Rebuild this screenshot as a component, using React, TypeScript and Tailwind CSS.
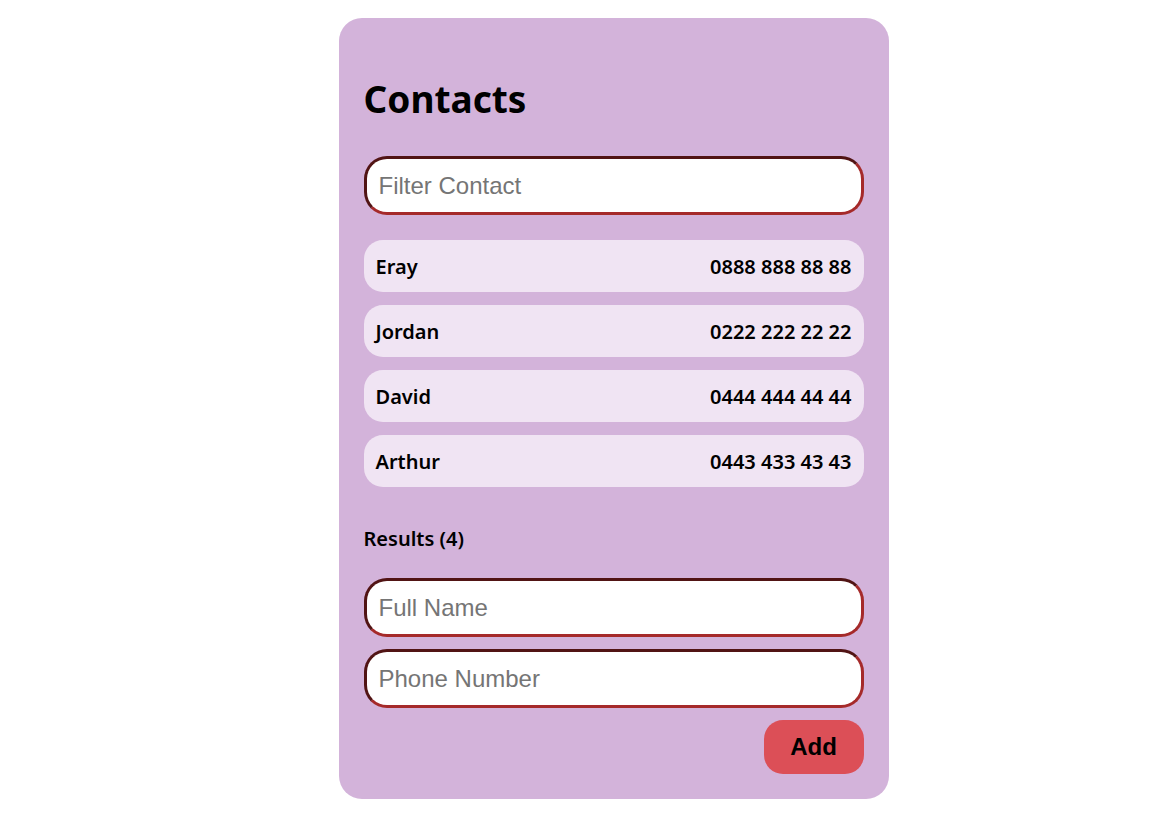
import { useState } from "react";
import type { FormEvent } from "react";

type Contact = { name: string; phone: string };

const initialContacts: Contact[] = [
  { name: "Eray", phone: "0888 888 88 88" },
  { name: "Jordan", phone: "0222 222 22 22" },
  { name: "David", phone: "0444 444 44 44" },
  { name: "Arthur", phone: "0443 433 43 43" },
];

type FieldProps = { label: string; value: string; onChange: (value: string) => void };

function Field({ label, value, onChange }: FieldProps) {
  return (
    <input
      type="text"
      aria-label={label}
      placeholder={label}
      value={value}
      onChange={(e) => onChange(e.target.value)}
      className="block h-[59px] w-full rounded-[23px] border-[3px] border-[brown] [border-style:inset] bg-white px-3 font-['Liberation_Sans',Arial,sans-serif] text-2xl text-black outline-none placeholder:text-[#757575]"
    />
  );
}

export default function App() {
  const [contacts, setContacts] = useState(initialContacts);
  const [filter, setFilter] = useState("");
  const [name, setName] = useState("");
  const [phone, setPhone] = useState("");

  const shown = contacts.filter((c) =>
    (c.name + " " + c.phone).toLowerCase().includes(filter.toLowerCase()),
  );

  function addContact(e: FormEvent) {
    e.preventDefault();
    if (!name || !phone) return;
    setContacts([...contacts, { name, phone }]);
    setName("");
    setPhone("");
  }

  return (
    <div className="min-h-screen bg-white pt-[18px] pb-4 pl-[54px] font-['Noto_Sans',sans-serif] text-black">
      <main className="mx-auto w-full max-w-[550px] rounded-[23px] bg-[#d3b3da] px-[25px] pt-[54px] pb-[25px]">
        <h1 className="mb-[31px] text-[37px] leading-[53px] font-bold">Contacts</h1>
        <Field label="Filter Contact" value={filter} onChange={setFilter} />
        <ul className="mt-[25px] flex flex-col gap-[13px]">
          {shown.map((c) => (
            <li
              key={c.name + c.phone}
              className="flex h-[52px] items-center justify-between rounded-[19px] bg-[#f0e4f3] px-3 pt-0.5 text-xl font-semibold"
            >
              <span>{c.name}</span>
              <span>{c.phone}</span>
            </li>
          ))}
        </ul>
        <p className="mt-[38px] mb-[25px] text-xl leading-7 font-semibold">Results ({shown.length})</p>
        <form onSubmit={addContact} className="flex flex-col gap-3">
          <Field label="Full Name" value={name} onChange={setName} />
          <Field label="Phone Number" value={phone} onChange={setPhone} />
          <button
            type="submit"
            className="h-[54px] w-[100px] self-end rounded-[19px] bg-[#dc4f57] font-['Liberation_Sans',Arial,sans-serif] text-2xl font-bold"
          >
            Add
          </button>
        </form>
      </main>
    </div>
  );
}
